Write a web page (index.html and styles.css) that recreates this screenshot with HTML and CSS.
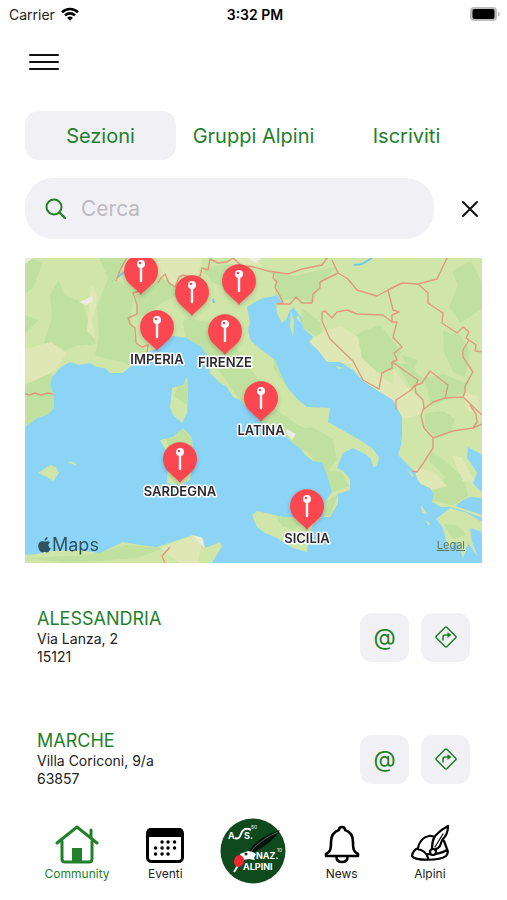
FILE: index.html
```
<!DOCTYPE html>
<html lang="it">
<head>
  <meta charset="UTF-8">
  <meta name="viewport" content="width=device-width, initial-scale=1.0">
  <title>Community</title>
  <link rel="stylesheet" href="styles.css">
</head>
<body>
  <div class="status-bar">
    <div class="carrier">
      <span>Carrier</span>
      <svg width="18" height="14" viewBox="0 0 18 14" fill="none" stroke="#000" stroke-width="2.6">
        <path d="M1 5.2a11.5 11.5 0 0 1 16 0M4 8.4a7.2 7.2 0 0 1 10 0"/>
        <path d="M9 13.8l-2.9-3a4.2 4.2 0 0 1 5.8 0z" fill="#000" stroke="none"/>
      </svg>
    </div>
    <span class="time">3:32 PM</span>
    <svg class="battery" width="32" height="16" viewBox="0 0 32 16">
      <rect x="1" y="1" width="27" height="14" rx="4" fill="#bdbdbd"/>
      <rect x="3.500" y="3" width="22" height="10" rx="2" fill="#000"/>
      <path d="M29 5.500q2 1 2 2.500t-2 2.500z" fill="#bdbdbd"/>
    </svg>
  </div>

  <header class="header">
    <button class="menu-button" aria-label="Menu">
      <span></span><span></span><span></span>
    </button>
  </header>

  <main>
    <div class="tabs">
      <button class="tab active">Sezioni</button>
      <button class="tab">Gruppi Alpini</button>
      <button class="tab">Iscriviti</button>
    </div>

    <div class="search-row">
      <label class="search-box">
        <svg width="22" height="22" viewBox="0 0 22 22" fill="none" stroke="#23802a" stroke-width="2" stroke-linecap="round">
          <circle cx="9" cy="9" r="7.500"/>
          <path d="M14.500 14.500l5.500 5.500" stroke-width="2.400"/>
        </svg>
        <input type="text" placeholder="Cerca" aria-label="Cerca">
      </label>
      <button class="clear-button" aria-label="Cancella">
        <svg width="18" height="18" viewBox="0 0 18 18" stroke="#111" stroke-width="2" stroke-linecap="round">
          <path d="M2 2l14 14M16 2L2 16"/>
        </svg>
      </button>
    </div>

    <div class="map">
      <svg class="map-canvas" viewBox="25 258 457 305">
        <defs>
          <clipPath id="land">
            <path d="M25 258H482V455L477 452 468 447 467 458 472 465 477 473 473 483 478 489 482 492V498L470 497 463 500 455 506 482 515 482 518 464 511 450 507 441 507 432 502 434 494 430 488 421 484 418 480 415 472 408 465 398 455 401 445 402 435 402 418 397 408 393 400 380 392 363 381 353 370 340 362 327 362 318 350 309 342 313 337 303 328 302 318 293 307 289 312 286 320 282 323 277 313 276 304 282 302 277 295 270 297 263 298 255 302 247 307 250 322 248 330 251 341 263 351 275 360 280 373 287 387 298 400 307 407 330 408 328 422 344 431 360 440 372 448 379 457 377 466 373 467 371 459 365 454 353 448 343 453 337 468 343 471 350 479 350 490 338 494 338 503 330 517 324 517 325 502 332 492 328 477 322 462 313 461 305 455 301 449 293 443 285 435 267 427 256 416 247 408 240 400 233 397 227 387 220 383 210 373 209 360 202 347 187 338 173 336 160 347 148 352 139 361 130 367 123 373 110 373 105 368 97 367 90 363 79 365 70 362 61 367 52 377 50 385 53 393 54 408 47 415 37 418 25 427z"/>
            <path d="M252 515l5-4 13 3 13 3 20 1 19-1-9 8-5 13-1 14-14-4-16-10-12-5-8-6z"/>
            <path d="M187 377l1 13-1 23-5 10-9-8-3-8 2-19 11-3z"/>
            <path d="M183 428l9 10 1 17-3 25-10 5-13-2 1-28-8-15 13-3z"/>
            <path d="M25 555l12-1 13-3 27-1 23 3 23-11 17 3 17 2 18-6 18-6 10 3 2 10 15-6 2 4-10 17H25z"/>
            <path d="M38 473l12-8 6 2 3 6-6 8-6-4zM67 463q6-4 10 3l-4-2z"/>
            <path d="M436 519l14-11 17 5 15 9v10l-12-4 2 14 6 15-10-14-5 15-6-16-9 6-5-20zM421 505l5 7 2 2-6-1zM425 520l5 3-1 3zM291 311l3 10-1 16-3-11zM296 318l3-3 3 9zM336 366l8 2-6 1zM407 469l7 7-2 1z"/>
          </clipPath>
          <g id="pin">
            <path d="M0 24C-3 19-7 18-10 14A17 17 0 1 1 10 14C7 18 3 19 0 24z" fill="#fc4650"/>
            <path d="M0-5V10" stroke="#fff" stroke-width="2.400" stroke-linecap="round"/>
            <circle cy="-7" r="4" fill="#fff"/>
            <circle cx="-1" cy="-8" r="1.300" fill="#fc4650"/>
          </g>
        </defs>

        <rect x="25" y="258" width="457" height="305" fill="#8bd4f6"/>

        <g clip-path="url(#land)">
          <rect x="25" y="258" width="457" height="305" fill="#d0e6a8"/>
          <!-- woods -->
          <g fill="#bfe09e">
            <path d="M50 295l9-15 5 15 18 7 8 24 6 18-20 2-22 9-10-12 8-26zM99 258h27l-9 22 17 12-3 24 4 24 13 12-18 14-8-4-27-6 4-21-2-28 11-29zM25 315l14 5-14 13zM25 382l26-11 7 38-33 18zM25 258l18 4-10 26-8 6z"/>
            <path d="M135 294l21-10 10-9 18 18-21 9-12 9-14 7zM187 318l20 4 25 16 11 22 18 22 14 27 23 16 16 7 8 27-22-10-51-36-29-41-34-28-3-22zM202 268l30-4-2 24-17-5zM275 273l19 3 44-10-18 18-7 19-15-5-23 4z"/>
            <path d="M302 308l18 14 5 20-23-15zM356 335l8-4 16-6 14 17 7 10-7 17-15 4-17-13-6-17zM395 363l12 1 17 15-12 10zM424 378l20-4 21 9 8-14-7 23-35 14zM452 271l19-10 11 22v26l-22 14-11-16 9-22zM443 331l17 4 10 17-5 25-12-5-9-20zM425 413l18-2 12 8-4 13-15 7-11-13zM431 451l13 9 20 18 4 18-15 9-22-5 2-12 13-11-17-16zM402 355l16 5-6 15z"/>
            <path d="M295 430l18-3 20 12 4 21-9 10 13 2 8 14-18 7-8-17-9-15zM325 502l13-8-8 22h-8zM276 516h35l-17 14-12-4zM165 435l17-7 11 13-2 22-16 7zM182 378l7 5-2 22-13-9zM444 524l14 1 8 10-13 4zM25 558l60-3 17-3 24-7 39 3-29 10-67 5z"/>
            <path d="M250 306l12-6 14 6-22 3zM273 354l8 18 18 22-10-4-15-21z"/>
          </g>
          <!-- dry ground -->
          <g fill="#dfe8b5">
            <path d="M309 342l15-11 17-5 17 11 4 21 17 16 19 15-2 18-27-19-19-24-23-3zM394 370l17 22 12 9 1 12-20 6-11-18zM157 258h45l-4 18-14-2-9 12-16-11zM231 258h24l7 8-32-2zM416 467l19 6 12 13-14 4-18-9zM464 392l13 4 5 21-16-7zM25 349l26-7 16 11-12 18-30 14zM91 285l7 12-6 24 3 18-8-8zM452 455l10 3 14 25-13-2zM160 548l33-12 9 6-4 21h-19z"/>
          </g>
          <g fill="#edece2">
            <path d="M79 302l12-5 1-3 1 7-7 4zM287 429l9 5-4 6-6-7zM25 258h8l-8 6zM193 535l9 3 3 10-8-8zM248 258h14l-6 5z"/>
          </g>
        </g>

        <path d="M354 265l8-1 10-6M118 277l6-5M213 299l1 4" fill="none" stroke="#74c6ef" stroke-width="2"/>

        <!-- borders -->
        <g fill="none" stroke="#de9a7e" stroke-width="1.400" stroke-linejoin="round">
          <path d="M25 394l5 1 5-2 6 2 7-2 5 1"/>
          <path d="M127 258l-6 10-5 13M142 290l-9 3 4 12v9l-9 4 2 6 5 4 1 15 6 4 6-2-1 8M158 283l3-5 4-4 4 9 6 4 4-10 4-2 10 3 7-2 2-8 6 2 2-11 8 4 9-1 6-4 10 9 7-1 18 5 20 3 14-5 20-4 5-7 5-2"/>
          <path d="M332 260l6 13 10 6 9 11 20 6 11-6 14-7 16 1 19-5 10-21"/>
          <path d="M274 272l-1 6 4 4-2 5 7 13 1 3-6 1 13 0 6-7 6 6h10l1-9 7-6v-6l18-9"/>
          <path d="M322 312l3-1 7 7 5-6 10-2 10 4 26 1 9 7 5 0-4 15 9 10-8 6 3 7-5 2v6l-10 5-3 16-16-9-10-19-23-22-8-18zM388 290l5 20 6 2-7 3v7M418 284l10 9v10l15 10-1 10 15 10 6-6 6 5-3 6 10 7-1 6 8 1M469 340l-6 10v7l10 15-8 14v6l-2 5-18 1 3-13-18-14-8 12-8 3-3 4-15 10v9M392 362l26 18-3 7 1 6 7 7 1 9 9-7 12-4M463 397l19 18M424 407l-3 9 3 12 9 10 20-7 20-3 4-6-1-8-6-9M482 424l-9 4M433 438v10l-9 14-7 10-5-1M170 547l-8 9 3 7"/>
        </g>

        <g class="pins">
          <use href="#pin" x="141" y="271"/>
          <use href="#pin" x="192" y="292"/>
          <use href="#pin" x="239" y="281"/>
          <use href="#pin" x="157" y="327"/>
          <use href="#pin" x="225" y="331"/>
          <use href="#pin" x="261" y="398"/>
          <use href="#pin" x="180" y="459"/>
          <use href="#pin" x="307" y="506"/>
        </g>

        <g class="pin-labels">
          <text x="157" y="364">IMPERIA</text>
          <text x="225" y="367">FIRENZE</text>
          <text x="261" y="435">LATINA</text>
          <text x="180" y="496">SARDEGNA</text>
          <text x="307" y="543">SICILIA</text>
        </g>
      </svg>
      <div class="map-footer">
        <span class="map-brand">
          <svg width="13" height="16" viewBox="0 0 13 16" fill="#2f5263">
            <path d="M9.500 0Q9.600 3 6.500 3.800 6.400 1 9.500 0zM6.600 4.800C8 4.800 9.500 3.200 12 5.400 9.600 7.100 10 10.300 12.700 11.300 11.500 14 10.200 16.500 8 15.300 6.800 14.800 6.200 14.900 5.200 15.400 2.800 16.300 0 12 .2 8.700.4 4.900 3.600 3.500 6.600 4.800z"/>
          </svg>Maps</span>
        <a class="legal" href="#">Legal</a>
      </div>
    </div>

    <ul class="sections">
      <li class="section">
        <div class="info">
          <h2>ALESSANDRIA</h2>
          <p>Via Lanza, 2</p>
          <p>15121</p>
        </div>
        <button class="action" aria-label="Email">@</button>
        <button class="action" aria-label="Indicazioni">
          <svg width="22" height="22" viewBox="0 0 22 22" fill="none" stroke="#23802a" stroke-width="1.600" stroke-linejoin="round">
            <path d="M10 1.500q1-1 2 0L20.500 10q1 1 0 2L12 20.500q-1 1-2 0L1.500 12q-1-1 0-2z"/>
            <path d="M8 14.500V11q0-2 2-2h4"/>
            <path d="M12.500 6l4 3-4 3z" fill="#23802a" stroke="none"/>
          </svg>
        </button>
      </li>
      <li class="section">
        <div class="info">
          <h2>MARCHE</h2>
          <p>Villa Coriconi, 9/a</p>
          <p>63857</p>
        </div>
        <button class="action" aria-label="Email">@</button>
        <button class="action" aria-label="Indicazioni">
          <svg width="22" height="22" viewBox="0 0 22 22" fill="none" stroke="#23802a" stroke-width="1.600" stroke-linejoin="round">
            <path d="M10 1.500q1-1 2 0L20.500 10q1 1 0 2L12 20.500q-1 1-2 0L1.500 12q-1-1 0-2z"/>
            <path d="M8 14.500V11q0-2 2-2h4"/>
            <path d="M12.500 6l4 3-4 3z" fill="#23802a" stroke="none"/>
          </svg>
        </button>
      </li>
    </ul>
  </main>

  <nav class="bottom-nav">
    <a href="#" class="nav-item active">
      <svg width="44" height="40" viewBox="0 0 44 40" fill="none" stroke="#23802a" stroke-width="3" stroke-linecap="round" stroke-linejoin="round">
        <path d="M2 19L22 3l20 16M7 17v18q0 3 3 3h24q3 0 3-3V17M36 13V6"/>
        <path d="M17 24h10v13H17z" fill="#23802a" stroke="none"/>
      </svg>
      Community
    </a>
    <a href="#" class="nav-item">
      <svg width="40" height="40" viewBox="0 0 40 40">
        <rect x="2.500" y="5.500" width="35" height="32" rx="4" fill="#fff" stroke="#000" stroke-width="3"/>
        <path d="M2 13V8q0-4 4-4h28q4 0 4 4v5z"/>
        <path d="M17 18h.1M23 18h.1M29.500 18h.1M10.500 24h.1M17 24h.1M23 24h.1M29.500 24h.1M10.500 30h.1M17 30h.1M23 30h.1" stroke="#000" stroke-width="3.400" stroke-linecap="round"/>
      </svg>
      Eventi
    </a>
    <a href="#" class="nav-logo" aria-label="Associazione Nazionale Alpini">
      <svg width="66" height="66" viewBox="0 0 66 66">
        <circle cx="33" cy="33" r="32.500" fill="#0f4a1f"/>
        <path d="M27 37Q34 20 60 12 52 26 29 37z" fill="#08130b"/>
        <path d="M29 36Q39 22 58 14" fill="none" stroke="#456b50" stroke-width="1"/>
        <path d="M15 20q4 2 6-4t8-5l2 1" fill="none" stroke="#fff" stroke-width="2"/>
        <path d="M20 36l8-3 5 1 3 2-2 4 1 2-6-1-7 1z" fill="#fff"/>
        <path d="M14 54l5-8" stroke="#e9ece9" stroke-width="2"/>
        <ellipse cx="19" cy="43" rx="5" ry="6" transform="rotate(15 19 43)" fill="#ef2733"/>
        <circle cx="26" cy="36" r="1.500" fill="#222"/>
        <g class="logo-text">
          <text x="8" y="21">A</text>
          <text x="24" y="21">S.</text>
          <text x="36" y="41">NAZ.</text>
          <text x="23" y="52">ALPINI</text>
        </g>
        <g class="logo-small">
          <text x="31" y="11">50</text>
          <text x="57" y="34">10</text>
        </g>
      </svg>
    </a>
    <a href="#" class="nav-item">
      <svg width="40" height="40" viewBox="0 0 40 40" fill="none" stroke="#000" stroke-width="2.600" stroke-linejoin="round">
        <path d="M17 6q0-3 3-3t3 3c6 2 8 6 8 12 0 8 1 10 5 12v2H4v-2c4-2 5-4 5-12 0-6 2-10 8-12z"/>
        <path d="M14.500 33q0 5 5.500 5t5.500-5"/>
      </svg>
      News
    </a>
    <a href="#" class="nav-item">
      <svg width="40" height="40" viewBox="0 0 40 40" fill="none" stroke="#000" stroke-width="2.200" stroke-linecap="round" stroke-linejoin="round">
        <path d="M8 24c1-6 5-11 11-12 3-1 5 2 8 0M8 24c-3 1-6 5-6 8 2 5 28 5 34 0 2-2 2-5 1-7L34 17M7 25c6 1 10 4 11 9M17 30c9 1 15-1 20-4"/>
        <path d="M22 27c0-6 0-12 4-16S34 4 38 2c0 6-2 10-5 13s-1 7-5 9-4 2-6 6z" fill="#fff"/>
        <path d="M25 23L33 10" stroke-width="1.200"/>
        <circle cx="23" cy="28" r="3" fill="#fff"/>
      </svg>
      Alpini
    </a>
  </nav>
</body>
</html>
```

FILE: styles.css
```
* {
  box-sizing: border-box;
}

body {
  font-family: Inter, "Liberation Sans", sans-serif;
  background-color: #fff;
  color: #222;
  margin: 0;
  min-height: 100vh;
  display: flex;
  flex-direction: column;
}

button {
  font-family: inherit;
  border: none;
  padding: 0;
  background: none;
  cursor: pointer;
}

a {
  color: inherit;
  text-decoration: none;
}

h2, p {
  margin: 0;
}

/* Status bar */
.status-bar {
  display: grid;
  grid-template-columns: 1fr auto 1fr;
  align-items: center;
  height: 28px;
  padding: 0 6px 0 9px;
  font-size: 14px;
}

.carrier {
  display: flex;
  align-items: center;
  gap: 6px;
}

.time {
  font-weight: 600;
  color: #000;
}

.battery {
  justify-self: end;
}

.header {
  padding: 26px 29px 41px;
}

.menu-button {
  display: flex;
  flex-direction: column;
  gap: 5px;
  width: 30px;
}

.menu-button span {
  height: 2px;
  width: 100%;
  background-color: #111;
  border-radius: 1px;
}

main {
  flex: 1;
  padding: 0 25px;
}

/* Tabs */
.tabs {
  display: grid;
  grid-template-columns: repeat(3, 1fr);
  gap: 2px;
}

.tab {
  height: 49px;
  border-radius: 14px;
  font-size: 20px;
  color: #23802a;
  white-space: nowrap;
}

.tab.active {
  background-color: #f1f0f5;
}

/* Search */
.search-row {
  display: flex;
  align-items: center;
  gap: 24px;
  margin: 18px 0 19px;
}

.search-box {
  flex: 1;
  display: flex;
  align-items: center;
  gap: 14px;
  height: 61px;
  padding: 0 20px;
  border-radius: 28px;
  background-color: #f1f0f5;
}

.search-box input {
  flex: 1;
  min-width: 0;
  border: none;
  outline: none;
  padding: 0;
  background: none;
  font-family: inherit;
  font-size: 21px;
}

.search-box input::placeholder {
  color: #bcbbc1;
}

.clear-button {
  display: flex;
  padding: 3px;
}

/* Map */
.map {
  position: relative;
}

.map-canvas {
  display: block;
  width: 100%;
}

.pins {
  filter: drop-shadow(0 2px 2px rgba(0, 0, 0, 0.2));
}

.pin-labels {
  font-size: 13px;
  font-weight: 600;
  text-anchor: middle;
  fill: #2b2b30;
  stroke: #fff;
  stroke-width: 3px;
  stroke-linejoin: round;
  paint-order: stroke;
}

.map-footer {
  position: absolute;
  left: 13px;
  right: 17px;
  bottom: 8px;
  display: flex;
  align-items: center;
  justify-content: space-between;
}

.map-brand {
  display: flex;
  align-items: center;
  gap: 1px;
  font-size: 18px;
  color: #2f5263;
}

.legal {
  font-size: 11px;
  color: #5d7866;
  text-decoration: underline;
}

/* List */
.sections {
  list-style: none;
  margin: 0;
  padding: 45px 12px 0;
  display: flex;
  flex-direction: column;
  gap: 64px;
}

.section {
  display: flex;
  align-items: center;
  gap: 12px;
}

.info {
  flex: 1;
  font-size: 14px;
  line-height: 18px;
}

.info h2 {
  font-size: 18px;
  font-weight: 400;
  line-height: 22px;
  color: #23802a;
}

.action {
  display: flex;
  align-items: center;
  justify-content: center;
  width: 49px;
  height: 49px;
  border-radius: 12px;
  background-color: #f1f0f5;
  color: #23802a;
  font-size: 23px;
}

/* Bottom navigation */
.bottom-nav {
  position: sticky;
  bottom: 0;
  display: grid;
  grid-template-columns: repeat(5, 1fr);
  align-items: start;
  padding: 6px 33px 16px;
  background-color: #fff;
}

.nav-item {
  display: flex;
  flex-direction: column;
  align-items: center;
  gap: 2px;
  padding-top: 6px;
  font-size: 12px;
  line-height: 16px;
}

.nav-item.active {
  color: #23802a;
}

.nav-logo {
  justify-self: center;
}

.nav-logo svg {
  display: block;
}

.logo-text {
  font-size: 9px;
  font-weight: 700;
  fill: #fff;
}

.logo-small {
  font-size: 5px;
  fill: #fff;
}
```
